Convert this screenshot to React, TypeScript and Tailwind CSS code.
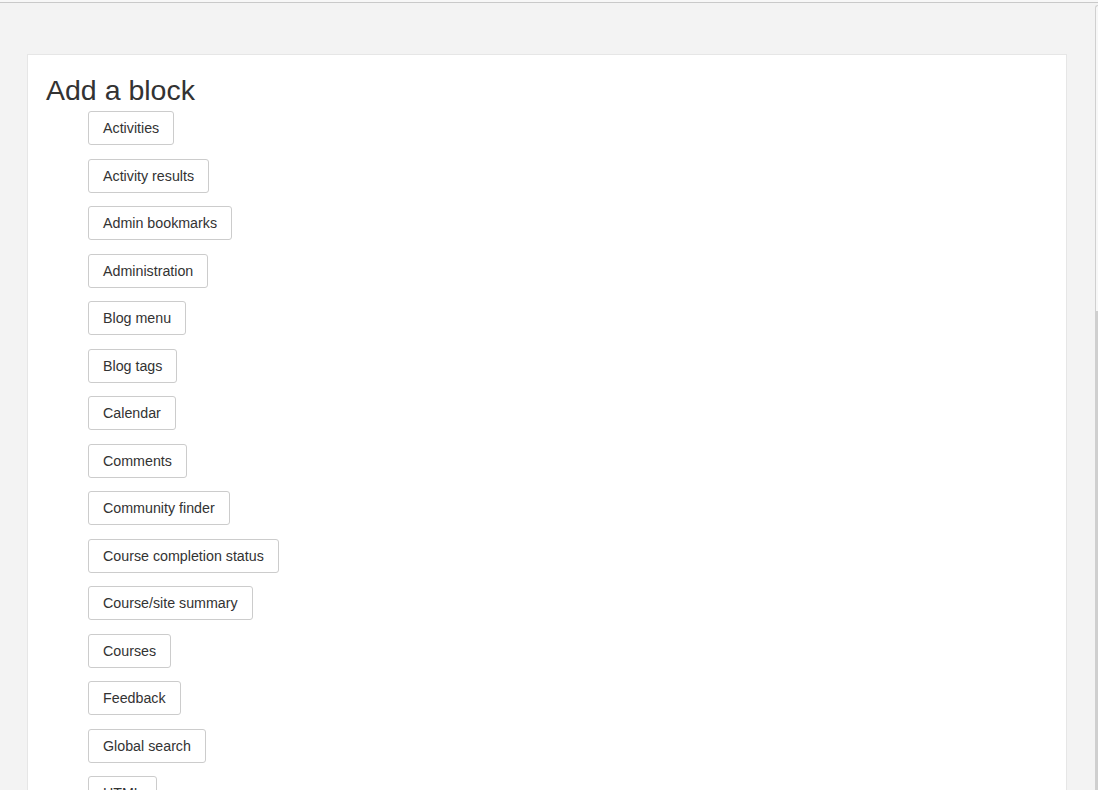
import React from 'react';

const blocks = [
  'Activities',
  'Activity results',
  'Admin bookmarks',
  'Administration',
  'Blog menu',
  'Blog tags',
  'Calendar',
  'Comments',
  'Community finder',
  'Course completion status',
  'Course/site summary',
  'Courses',
  'Feedback',
  'Global search',
  'HTML',
  'Latest announcements',
  'Latest badges',
];

export default function App() {
  return (
    <div
      className="h-screen overflow-hidden bg-[#f3f3f3] text-[#333]"
      style={{ fontFamily: '"Liberation Sans", Arial, sans-serif' }}
    >
      <div className="h-[3px] border-b border-[#c9c9c9] bg-[#f7f7f7]" />
      <div className="flex h-full">
        <div className="flex-1 pl-[27px] pr-[28px] pt-[51px]">
          {/* Card */}
          <div className="min-h-[800px] border border-[#e6e6e6] bg-white px-[18px] pt-[18px]">
            <h2 className="text-[28.5px] font-normal leading-[34px] text-[#333]">Add a block</h2>
            <ul className="mt-[4px] flex flex-col gap-[13.5px] pl-[42px]">
              {blocks.map(b => (
                <li key={b}>
                  <button className="h-[34px] rounded-[3px] border border-[#cccccc] bg-white px-[14px] text-[14.25px] leading-[20px] text-[#333]">
                    {b}
                  </button>
                </li>
              ))}
            </ul>
          </div>
        </div>
        {/* frame edge / scrollbar */}
        <div className="flex w-[3px] flex-col pt-[2px]">
          <div className="h-[306px] rounded-tl-[3px] border-l border-t border-[#d0d0d0] bg-[#f7f7f7]" />
          <div className="flex-1 border-l-[3px] border-[#cfcfcf]" />
        </div>
      </div>
    </div>
  );
}
